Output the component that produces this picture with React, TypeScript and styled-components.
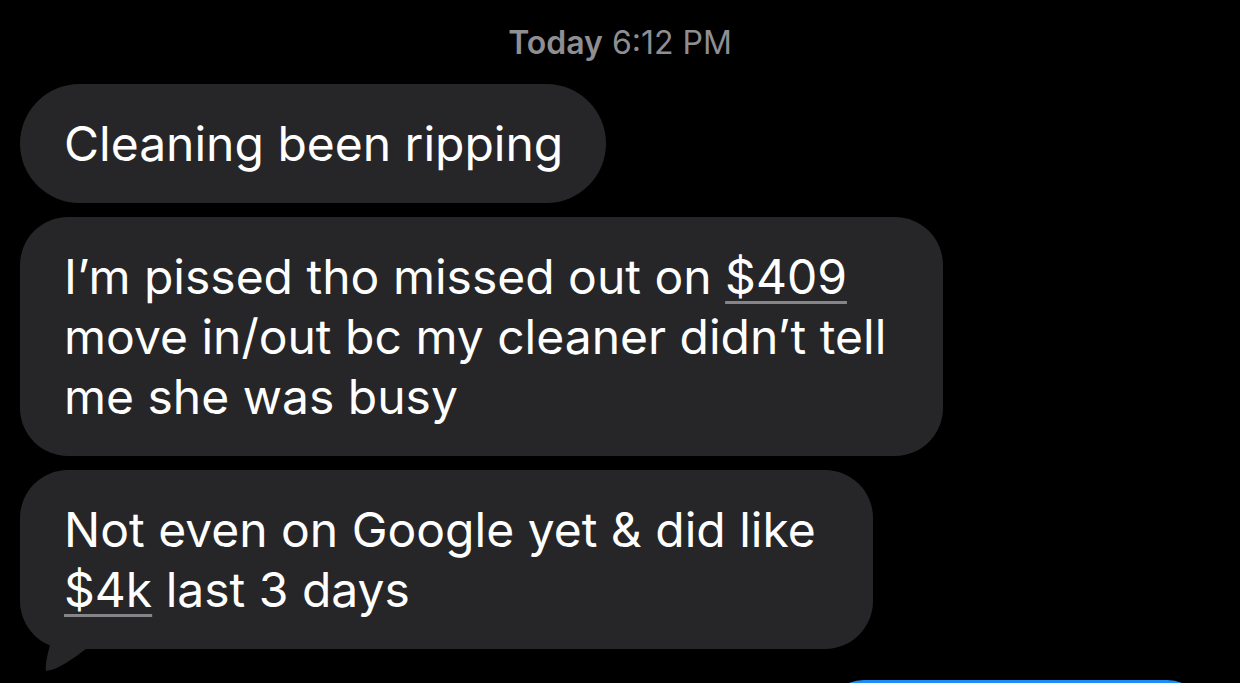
import React from 'react';
import styled, {createGlobalStyle} from "styled-components";

const GlobalStyle = createGlobalStyle`
  html, body {
    margin: 0;
    padding: 0;
    background: #000;
    overflow: hidden;
  }
  body {
    font-family: Inter, "Noto Sans", "Liberation Sans", sans-serif;
    -webkit-font-smoothing: antialiased;
  }
`

const Money = styled.span`
  text-decoration: underline;
  text-decoration-color: #858589;
  text-decoration-thickness: 3px;
  text-underline-offset: 7px;
`

type Message = {
    id: number
    lines: React.ReactNode[]
    tail?: boolean
}

const messages: Message[] = [
    {id: 1, lines: ['Cleaning been ripping']},
    {
        id: 2,
        lines: [
            <>I’m pissed tho missed out on <Money>$409</Money></>,
            'move in/out bc my cleaner didn’t tell',
            'me she was busy',
        ]
    },
    {
        id: 3,
        lines: [
            'Not even on Google yet & did like',
            <><Money>$4k</Money> last 3 days</>,
        ],
        tail: true
    },
]

function App() {
    return (
        <StyledApp>
            <GlobalStyle/>
            <Stamp><b>Today</b> 6:12 PM</Stamp>
            <Thread>
                {messages.map(m => (
                    <Bubble key={m.id} $multi={m.lines.length > 1}>
                        {/* tail goes first so the text lines paint over it */}
                        {m.tail && (
                            <Tail width="66" height="70" viewBox="0 0 66 70">
                                <path d="M3 0 C8 25 20 38 30 44 C28 52 25 62 26 70 C40 68 52 58 66 48 L66 0 Z"
                                      fill="#262628"/>
                            </Tail>
                        )}
                        {m.lines.map((line, i) => <Line key={i}>{line}</Line>)}
                    </Bubble>
                ))}
            </Thread>
            <Outgoing/>
        </StyledApp>
    );
}

export default App;

const StyledApp = styled.div`
  width: 1240px;
  height: 683px;
  background: #000;
  position: relative;
  overflow: hidden;
  padding-top: 24px;
  box-sizing: border-box;
`

const Stamp = styled.div`
  text-align: center;
  color: #8e8e93;
  font-size: 32px;
  line-height: 38px;
  font-weight: 400;

  b {
    font-weight: 600;
  }
`

const Thread = styled.div`
  display: flex;
  flex-direction: column;
  align-items: flex-start;
  gap: 14px;
  margin-top: 22px;
  padding-left: 20px;
`

const Bubble = styled.div<{ $multi: boolean }>`
  position: relative;
  background: #262628;
  color: #fff;
  border-radius: ${p => p.$multi ? '48px' : '60px'};
  padding: 30px ${p => p.$multi ? '57px' : '43px'} 29px 44px;
  font-size: 48px;
  line-height: 60px;
  letter-spacing: 0;
`

const Line = styled.div`
  position: relative;
  white-space: nowrap;
`

const Tail = styled.svg`
  position: absolute;
  left: 0;
  bottom: -22px;
`

const Outgoing = styled.div`
  position: absolute;
  left: 824px;
  top: 680px;
  width: 383px;
  height: 80px;
  border-radius: 40px;
  background: #1d8cf8;
`
